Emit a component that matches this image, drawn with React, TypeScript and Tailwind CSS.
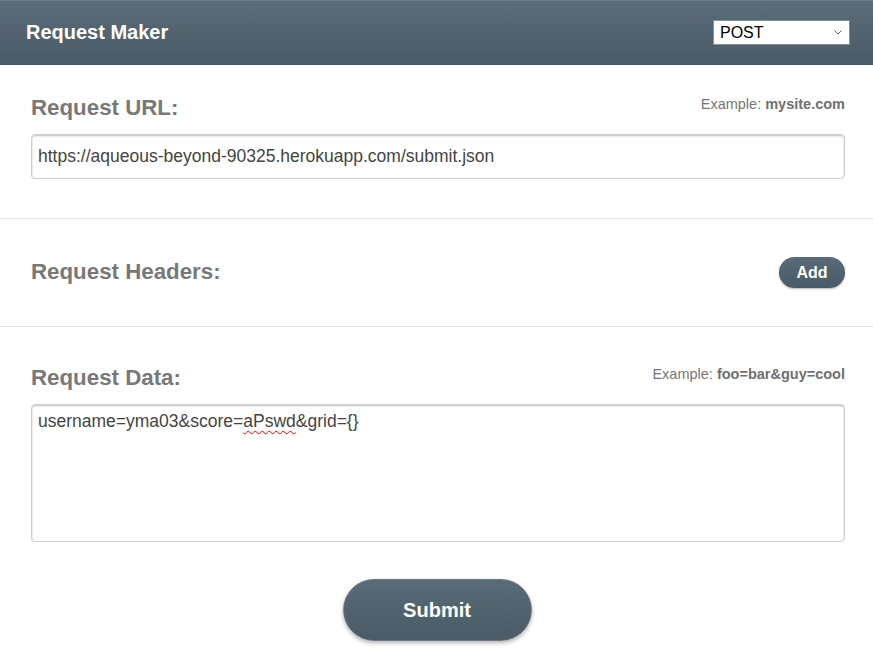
import React from "react";

const font = { fontFamily: '"Liberation Sans", Arial, sans-serif' };

function Heading({ children, className = "" }: { children: React.ReactNode; className?: string }) {
  return <h2 className={"text-[22.3px] leading-[26px] font-bold text-[#787878] " + className}>{children}</h2>;
}

function Example({ value }: { value: string }) {
  return (
    <div className="text-[14.5px] leading-[16px] text-[#777] mt-[1px]">
      Example: <span className="font-bold text-[#6f6f6f]">{value}</span>
    </div>
  );
}

export default function App() {
  return (
    <div className="w-[873px] h-[665px] bg-white overflow-hidden" style={font}>
      <header className="h-[65px] bg-gradient-to-b from-[#5b6b78] to-[#4a5a67] border-t border-[#6b7a86] flex items-center justify-between pl-[26px] pr-[23px]">
        <h1 className="text-white font-bold text-[20px] leading-[24px] mt-[-2px]">Request Maker</h1>
        <div className="w-[137px] h-[25px] bg-white border border-[#8a8f93] flex items-center justify-between pl-[6px] pr-[6px] mt-[-2px]">
          <span className="text-[16px] text-black leading-none mt-[1px]">POST</span>
          <svg width="8" height="5" viewBox="0 0 8 5" className="mr-[1px]">
            <path d="M0.5 0.5 L4 4 L7.5 0.5" fill="none" stroke="#666" strokeWidth="1" />
          </svg>
        </div>
      </header>

      <section className="pl-[31px] pr-[28px] pt-[30px] pb-[39px] border-b border-[#e6e6e6]">
        <div className="flex items-start justify-between">
          <Heading>Request URL:</Heading>
          <Example value="mysite.com" />
        </div>
        <div className="mt-[13px] h-[45px] rounded-[4px] border border-[#cfcfcf] shadow-[inset_0_1px_2px_rgba(0,0,0,0.25)] flex items-center pl-[6px] text-[17.5px] text-[#444]">
          https://aqueous-beyond-90325.herokuapp.com/submit.json
        </div>
      </section>

      <section className="pl-[31px] pr-[28px] h-[108px] border-b border-[#e6e6e6] flex items-center justify-between">
        <Heading className="mb-[2px]">Request Headers:</Heading>
        <button className="w-[66px] h-[31px] rounded-full bg-gradient-to-b from-[#596b78] to-[#4a5a67] text-white font-bold text-[16px] shadow-[0_1px_2px_rgba(0,0,0,0.3)]">
          Add
        </button>
      </section>

      <section className="pl-[31px] pr-[28px] pt-[38px]">
        <div className="flex items-start justify-between">
          <Heading>Request Data:</Heading>
          <Example value="foo=bar&guy=cool" />
        </div>
        <div className="mt-[13px] h-[138px] rounded-[4px] border border-[#cfcfcf] shadow-[inset_0_1px_2px_rgba(0,0,0,0.25)] pl-[6px] pt-[6px] text-[17.5px] leading-[20px] text-[#444]">
          username=yma03&amp;score=
          <span className="underline decoration-wavy decoration-[#e00] decoration-1 underline-offset-[3px]">aPswd</span>
          &amp;grid={"{}"}
        </div>
        <div className="flex justify-center mt-[37px]">
          <button className="w-[189px] h-[62px] mr-[2px] rounded-full bg-gradient-to-b from-[#596b78] to-[#4a5a67] text-white font-bold text-[20px] shadow-[0_2px_4px_rgba(0,0,0,0.3)] border border-[#6a7883]">
            Submit
          </button>
        </div>
      </section>
    </div>
  );
}
